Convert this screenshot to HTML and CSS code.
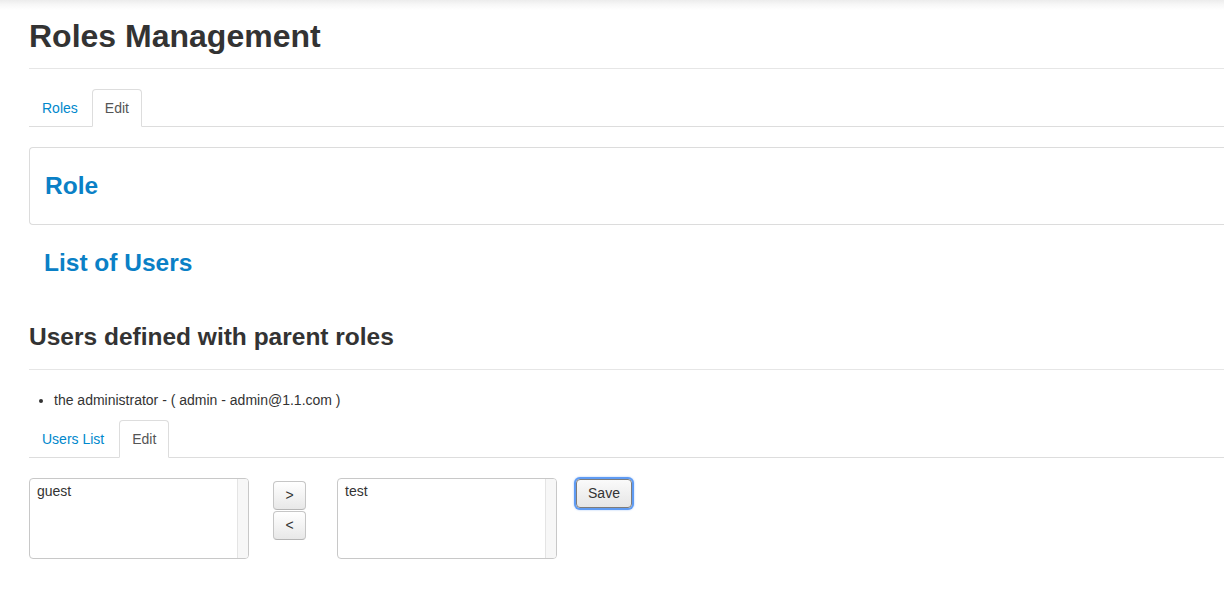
FILE: index.html
```html
<!DOCTYPE html>
<html lang="en">
<head>
<meta charset="utf-8">
<title>Roles Management</title>
<link rel="stylesheet" href="styles.css">
</head>
<body>
<div class="shade"></div>
<div class="page">
  <h2 class="page-title">Roles Management</h2>

  <ul class="nav-tabs">
    <li><a href="#">Roles</a></li>
    <li class="active"><a href="#">Edit</a></li>
  </ul>

  <div class="panel bordered">
    <h3 class="blue-heading">Role</h3>
  </div>

  <div class="panel">
    <h3 class="blue-heading">List of Users</h3>
  </div>

  <h3 class="section-title">Users defined with parent roles</h3>

  <ul class="user-list">
    <li>the administrator - ( admin - admin@1.1.com )</li>
  </ul>

  <ul class="nav-tabs nav-tabs-spaced">
    <li><a href="#">Users List</a></li>
    <li class="active"><a href="#">Edit</a></li>
  </ul>

  <div class="picker">
    <div class="listbox">
      <div class="options"><div class="option">guest</div></div>
      <div class="scrolltrack"></div>
    </div>
    <div class="movers">
      <button class="btn btn-move" type="button">&gt;</button>
      <button class="btn btn-move" type="button">&lt;</button>
    </div>
    <div class="listbox">
      <div class="options"><div class="option">test</div></div>
      <div class="scrolltrack"></div>
    </div>
    <button class="btn btn-save" type="button">Save</button>
  </div>
</div>
</body>
</html>
```

FILE: styles.css
```css
html, body {
  margin: 0;
  padding: 0;
  background: #fff;
  overflow-x: hidden;
}

body {
  font-family: "Liberation Sans", Arial, Helvetica, sans-serif;
  font-size: 14px;
  line-height: 20px;
  color: #333;
}

.shade {
  height: 10px;
  background: linear-gradient(to bottom, #ececec 0%, #f7f7f7 45%, #ffffff 100%);
}

.page {
  padding: 0 0 40px 29px;
}

.page-title {
  margin: 6px 0 0 0;
  font-size: 32px;
  line-height: 40px;
  font-weight: bold;
  color: #333;
  padding-bottom: 12px;
  border-bottom: 1px solid #e6e6e6;
}

.nav-tabs {
  list-style: none;
  margin: 20px 0 0 0;
  padding: 0;
  display: flex;
  border-bottom: 1px solid #ddd;
}

.nav-tabs li {
  margin-bottom: -1px;
}

.nav-tabs a {
  display: block;
  padding: 8px 12px;
  line-height: 20px;
  border: 1px solid transparent;
  border-radius: 4px 4px 0 0;
  color: #0088cc;
  text-decoration: none;
  margin-right: 1px;
}

.nav-tabs .active a {
  color: #555;
  background: #fff;
  border-color: #ddd #ddd transparent #ddd;
}

.panel {
  padding: 8px 15px;
}

.panel.bordered {
  margin-top: 20px;
  border: 1px solid #dcdcdc;
  border-right: none;
  border-radius: 4px 0 0 4px;
}

.blue-heading {
  margin: 10px 0;
  font-size: 24.5px;
  line-height: 40px;
  font-weight: bold;
  color: #0a80c6;
}

.section-title {
  margin: 16px 0 0 0;
  font-size: 24.5px;
  line-height: 40px;
  font-weight: bold;
  color: #333;
  padding-bottom: 12px;
  border-bottom: 1px solid #e6e6e6;
}

.user-list {
  margin: 20px 0 10px 0;
  padding-left: 25px;
}

.user-list li {
  line-height: 20px;
}

.nav-tabs-spaced {
  margin-top: 0;
  margin-bottom: 20px;
}

.nav-tabs-spaced a {
  margin-right: 2px;
}

.picker {
  display: flex;
  align-items: flex-start;
}

.listbox {
  width: 220px;
  height: 81px;
  box-sizing: border-box;
  border: 1px solid #c8c8c8;
  border-radius: 4px;
  display: flex;
  overflow: hidden;
  background: #fff;
}

.options {
  flex: 1;
  padding: 4px 7px;
}

.option {
  line-height: 17px;
  color: #333;
}

.scrolltrack {
  width: 10px;
  background: #f7f7f7;
  border-left: 1px solid #e4e4e4;
}

.movers {
  display: flex;
  flex-direction: column;
  gap: 1px;
  margin: 3px 31px 0 24px;
}

.btn {
  font-family: "Liberation Sans", Arial, Helvetica, sans-serif;
  font-size: 14px;
  color: #333;
  background: linear-gradient(to bottom, #ffffff, #e8e8e8);
  border: 1px solid #c6c6c6;
  border-bottom-color: #b5b5b5;
  border-radius: 4px;
  cursor: pointer;
  padding: 0;
  box-sizing: border-box;
}

.btn-move {
  width: 33px;
  height: 29px;
  line-height: 27px;
}

.btn-save {
  margin: 1px 0 0 19px;
  width: 56px;
  height: 29px;
  line-height: 27px;
  border: 1px solid #7c7c7c;
  border-radius: 4px;
  box-shadow: 0 0 0 2px #5f9bf3, 0 0 2px 2px rgba(95,155,243,0.6);
  background: linear-gradient(to bottom, #fafafa, #e6e6e6);
}
```
